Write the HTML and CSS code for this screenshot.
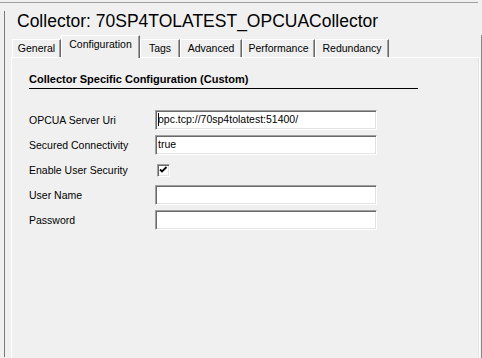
FILE: index.html
```html
<!DOCTYPE html>
<html lang="en">
<head>
    <meta charset="UTF-8">
    <title>Collector: 70SP4TOLATEST_OPCUACollector</title>
    <link rel="stylesheet" href="styles.css">
</head>
<body>

<div class="top-rule"></div>

<div class="editor">
    <h1 class="title">Collector: 70SP4TOLATEST_OPCUACollector</h1>

    <div class="tabview">
        <div class="tabs">
            <div class="tab tab-general">General</div>
            <div class="tab tab-config active">Configuration</div>
            <div class="tab tab-tags">Tags</div>
            <div class="tab tab-advanced">Advanced</div>
            <div class="tab tab-perf">Performance</div>
            <div class="tab tab-redundancy">Redundancy</div>
        </div>

        <div class="panel">
            <h3 class="section">Collector Specific Configuration (Custom)</h3>

            <div class="form">
                <label class="label">OPCUA Server Uri</label>
                <div class="field"><span class="caret"></span>opc.tcp://70sp4tolatest:51400/</div>

                <label class="label">Secured Connectivity</label>
                <div class="field">true</div>

                <label class="label">Enable User Security</label>
                <div class="check">
                    <svg width="9" height="9" viewBox="0 0 9 9">
                        <polyline points="1,3.5 3,5.5 7.5,1" fill="none" stroke="#000" stroke-width="1.8"/>
                    </svg>
                </div>

                <label class="label">User Name</label>
                <div class="field"></div>

                <label class="label">Password</label>
                <div class="field"></div>
            </div>
        </div>
    </div>
</div>

</body>
</html>
```

FILE: styles.css
```css
body {
    margin: 0;
    width: 482px;
    height: 358px;
    overflow: hidden;
    background: #f0f0f0;
    font-family: "Liberation Sans", Arial, sans-serif;
    color: #000;
}
.top-rule {
    width: 478px;
    height: 1px;
    margin-top: 2px;
    background: #a0a0a0;
}
.editor {
    margin: 9px 0 0 4px;
    height: 346px;
    border-left: 1px solid #7a7a7a;
}
.title {
    margin: -1px 0 0 0;
    padding-left: 12px;
    font-size: 17.5px;
    font-weight: normal;
    line-height: 20px;
}
.tabview {
    margin-top: 4px;
    height: 323px;
    border-right: 1px solid #8a8a8a;
}
.tabs {
    display: flex;
    align-items: flex-end;
    height: 22px;
    padding-left: 7px;
    position: relative;
    z-index: 1;
}
.tab {
    box-sizing: border-box;
    height: 18px;
    border-top: 1px solid #fff;
    border-left: 1px solid #fff;
    border-right: 1px solid #696969;
    box-shadow: inset -1px 0 #a0a0a0;
    font-size: 10.5px;
    line-height: 16px;
    text-align: center;
    white-space: nowrap;
}
.tab.active {
    height: 23px;
    margin-bottom: -1px;
    background: #f0f0f0;
    line-height: 17px;
}
.tab-general { width: 49px; }
.tab-config { width: 79px; }
.tab-tags { width: 40px; }
.tab-advanced { width: 62px; }
.tab-perf { width: 73px; }
.tab-redundancy { width: 74px; }
.panel {
    box-sizing: border-box;
    width: 469px;
    height: 301px;
    margin-left: 6px;
    padding: 15px 0 0 17px;
    border-top: 1px solid #fff;
    border-left: 1px solid #fff;
    border-right: 1px solid #fff;
    box-shadow: inset -1px 0 #e3e3e3;
}
.section {
    width: 389px;
    margin: 0;
    padding-bottom: 2px;
    border-bottom: 1px solid #000;
    font-size: 11px;
    line-height: 13px;
}
.form {
    display: grid;
    grid-template-columns: 126px 222px;
    grid-auto-rows: 20px;
    row-gap: 5px;
    margin-top: 21px;
}
.label {
    font-size: 10.5px;
    line-height: 20px;
}
.field {
    box-sizing: border-box;
    height: 20px;
    padding-left: 2px;
    background: #fff;
    border: 1px solid;
    border-color: #a0a0a0 #fff #fff #a0a0a0;
    box-shadow: inset 1px 1px #696969, inset -1px -1px #e3e3e3;
    font-size: 10.5px;
    line-height: 17px;
    white-space: nowrap;
}
.caret {
    display: inline-block;
    width: 1px;
    height: 13px;
    margin-right: -1px;
    vertical-align: -3px;
    background: #000;
}
.check {
    box-sizing: border-box;
    align-self: center;
    width: 13px;
    height: 13px;
    margin-left: 2px;
    padding: 1px 0 0 1px;
    background: #fff;
    border: 1px solid;
    border-color: #a0a0a0 #fff #fff #a0a0a0;
    box-shadow: inset 1px 1px #696969, inset -1px -1px #e3e3e3;
}
.check svg {
    display: block;
}
```
